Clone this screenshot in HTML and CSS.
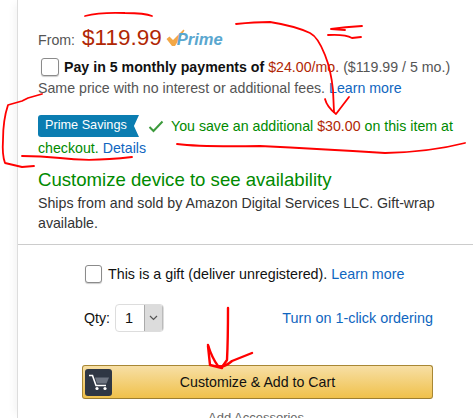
FILE: index.html
```html
<!DOCTYPE html>
<html lang="en">
<head>
<meta charset="utf-8">
<title>Buy box</title>
<link rel="stylesheet" href="styles.css">
</head>
<body>
<div class="panel">
  <div class="price-row">
    <span class="from">From:</span>
    <span class="price">$119.99</span>
    <span class="prime">
      <svg class="prime-check" width="19" height="18" viewBox="0 0 19 18"><path d="M0.5 10 L3.5 7.5 L7 11 L17.5 0.5 L18.5 1.5 L9 17 L6 17 Z" fill="#f3a847"/></svg><span class="prime-word">Prime</span>
    </span>
  </div>
  <div class="pay-row">
    <span class="box"></span>
    <span class="pay-text"><b>Pay in 5 monthly payments of</b> <span class="red">$24.00/mo.</span> ($119.99 / 5 mo.)</span>
  </div>
  <div class="same">Same price with no interest or additional fees. <a>Learn more</a></div>
  <div class="savings">
    <span class="badge">Prime Savings</span>
    <svg class="tick" width="16" height="13" viewBox="0 0 16 13"><path d="M1.5 7 L5.5 11 L14.5 1.5" fill="none" stroke="#3c9a3c" stroke-width="2"/></svg>
    <span class="green">You save an additional <span class="red">$30.00</span> on this item at</span>
  </div>
  <div class="checkout"><span class="green">checkout.</span> <a>Details</a></div>
  <div class="customize">Customize device to see availability</div>
  <div class="ships">Ships from and sold by Amazon Digital Services LLC. Gift-wrap available.</div>
  <hr class="rule">
  <div class="gift">
    <span class="box small"></span>
    <span class="gift-text">This is a gift (deliver unregistered). <a>Learn more</a></span>
  </div>
  <div class="qty-row">
    <span class="qty-label">Qty:</span>
    <span class="select"><span class="select-val">1</span><span class="select-arrow"><svg width="9" height="6" viewBox="0 0 9 6"><path d="M1 1 L4.5 4.5 L8 1" fill="none" stroke="#555" stroke-width="1.2"/></svg></span></span>
    <a class="oneclick">Turn on 1-click ordering</a>
  </div>
  <div class="cart-btn">
    <span class="cart-icon">
      <svg width="22" height="17" viewBox="0 0 22 17"><path d="M1 1.5 H4.5 L8 11.5 H18" fill="none" stroke="#fff" stroke-width="1.6"/><path d="M7 3.5 H21 L18.5 9.5 H9 Z" fill="#6d7480"/><circle cx="9" cy="14.5" r="1.6" fill="#fff"/><circle cx="17" cy="14.5" r="1.6" fill="#fff"/></svg>
    </span>
    <span class="cart-label">Customize &amp; Add to Cart</span>
  </div>
  <div class="acc">Add Accessories</div>
</div>
<svg class="scribble" width="473" height="418" viewBox="0 0 473 418">
  <g fill="none" stroke="#f00" stroke-width="1.8" stroke-linecap="round" stroke-linejoin="round">
    <path d="M85 16 Q100 12 125 13 Q145 13 152 16"/>
    <path d="M236 24 Q255 22 270 22 Q295 26 310 33 Q318 37 325 55 Q331 70 333 90 L334 112"/>
    <path d="M325 99 Q327 107 336 114 L349 97"/>
    <path d="M331 29 Q345 27 362 26 M331 29 L345 30 M328 35 Q345 34 352 38 L361 37"/>
    <path d="M177 144 Q200 147 260 146 Q320 149 385 153 Q430 152 465 143"/>
    <path d="M42 94 Q35 96 28 98 L22 101 L8 105 Q3 120 3 140 Q2 155 5 163 L22 167 L34 166"/>
    <path d="M22 156 Q40 156 60 158 Q90 162 132 157"/>
    <path class="thick" d="M228 308 Q228 340 227 360 L222 367"/>
    <path class="thick" d="M208 345 Q212 358 218 366 Q224 368 232 361 L252 353"/>
    <path class="thick" d="M208 346 L210 365 L222 368"/>
  </g>
</svg>
</body>
</html>
```

FILE: styles.css
```css
html, body {
  margin: 0;
  padding: 0;
}
body {
  width: 473px;
  height: 418px;
  overflow: hidden;
  background: #fff;
  font-family: "Liberation Sans", Arial, sans-serif;
  font-size: 14.2px;
  color: #111;
  position: relative;
}
a { color: #0f66c0; }
.red { color: #b12704; }
.green { color: #008a00; }
.panel {
  box-sizing: border-box;
  height: 418px;
  margin-left: 17px;
  padding: 25px 0 0 20px;
  border-left: 1px solid #ddd;
  box-shadow: -6px 0 8px -4px #f2f2f2;
}
.price-row {
  display: flex;
  align-items: baseline;
  height: 28px;
}
.from {
  font-size: 14.2px;
  color: #555;
  margin-right: 7px;
}
.price {
  font-size: 22.5px;
  color: #b12704;
  margin-right: 4px;
}
.prime {
  position: relative;
  font-style: italic;
  font-weight: bold;
  font-size: 16.5px;
  color: #5aa7cf;
  padding-left: 11px;
}
.prime-check {
  position: absolute;
  left: 0;
  top: -1px;
}
.prime-word { position: relative; }
.pay-row {
  display: flex;
  align-items: center;
  gap: 5px;
  margin: 3px 0 0 3px;
  height: 21px;
}
.pay-text {
  color: #555;
  white-space: nowrap;
}
.pay-text b { color: #111; }
.box {
  box-sizing: border-box;
  flex: none;
  width: 18px;
  height: 18px;
  border: 1.5px solid #8b8b8b;
  border-radius: 3px;
  background: #fff;
  box-shadow: 0 1px 1px #ccc;
}
.same {
  color: #555;
  margin-top: 1px;
  line-height: 20px;
  white-space: nowrap;
}
.savings {
  display: flex;
  align-items: center;
  margin-top: 17px;
  height: 22px;
  white-space: nowrap;
}
.badge {
  box-sizing: border-box;
  width: 101px;
  height: 22px;
  padding-left: 7px;
  line-height: 21px;
  font-size: 12.7px;
  color: #fff;
  background: #0b7db1;
  border-radius: 3px 0 0 3px;
  clip-path: polygon(0 0, 100% 0, 95% 50%, 100% 100%, 0 100%);
}
.tick { margin: 0 7px 0 9px; }
.checkout {
  line-height: 20px;
  margin-top: 1px;
}
.customize {
  color: #008a00;
  font-size: 18.6px;
  line-height: 22px;
  margin-top: 11px;
}
.ships {
  width: 415px;
  color: #333;
  line-height: 20px;
  margin-top: 2px;
}
.rule {
  border: 0;
  border-top: 1px solid #ccc;
  margin: 11px 0 0 -20px;
}
.gift {
  display: flex;
  align-items: center;
  gap: 6px;
  margin: 19px 0 0 47px;
  height: 20px;
  white-space: nowrap;
}
.gift-text { font-size: 14.3px; }
.small {
  width: 17px;
  height: 18px;
}
.qty-row {
  display: flex;
  align-items: center;
  margin: 20px 0 0 46px;
  height: 28px;
  width: 349px;
}
.select {
  display: flex;
  width: 49px;
  height: 28px;
  margin-left: 5px;
  box-sizing: border-box;
  border: 1px solid #ddd;
  border-radius: 4px;
  overflow: hidden;
  font-size: 14.5px;
}
.select-val {
  flex: 1;
  line-height: 26px;
  padding-left: 9px;
}
.select-arrow {
  display: flex;
  align-items: center;
  justify-content: center;
  width: 17px;
  background: #dcdcdc;
  border-left: 1px solid #aaa;
  border-right: 1px solid #bbb;
}
.oneclick {
  margin-left: auto;
  white-space: nowrap;
  font-size: 14.4px;
}
.cart-btn {
  box-sizing: border-box;
  display: flex;
  align-items: center;
  width: 351px;
  height: 34px;
  margin: 33px 0 0 44px;
  padding-left: 2px;
  border: 1px solid #a88734;
  border-bottom-color: #9c7e31;
  border-radius: 3px;
  background: linear-gradient(#f7dfa5, #f0c14b);
}
.cart-icon {
  display: flex;
  align-items: center;
  justify-content: center;
  width: 27px;
  height: 27px;
  border-radius: 3px;
  background: #2f3744;
}
.cart-label {
  flex: 1;
  text-align: center;
  padding-right: 29px;
}
.acc {
  margin: 11px 0 0 170px;
  color: #666;
  font-size: 13px;
}
.scribble {
  position: absolute;
  left: 0;
  top: 0;
  pointer-events: none;
}
.thick { stroke-width: 2.4; }
```
